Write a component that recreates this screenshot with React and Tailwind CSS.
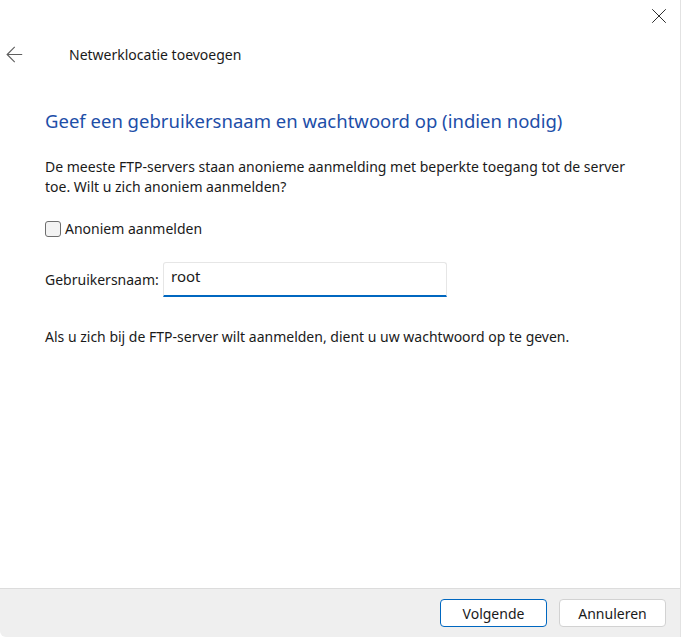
import { ArrowLeft, X } from 'lucide-react';

export default function App() {
  return (
    <div
      className="w-[681px] h-[637px] bg-white flex flex-col text-[#1a1a1a] overflow-hidden rounded-bl-[6px] border-r border-[#e2e2e2]"
      style={{ fontFamily: '"Segoe UI", "Noto Sans", sans-serif' }}
    >
      {/* Title bar */}
      <div className="h-[34px] flex justify-end">
        <button className="w-[42px] h-[32px] flex items-center justify-center text-[#1a1a1a]">
          <X size={26} strokeWidth={0.85} />
        </button>
      </div>

      {/* Header row */}
      <div className="h-[40px] flex items-center">
        <div className="w-[69px] pl-[2px] flex items-center text-[#5f5f5f]">
          <ArrowLeft size={25} strokeWidth={1.05} />
        </div>
        <span className="text-[14px] text-[#1a1a1a]">Netwerklocatie toevoegen</span>
      </div>

      {/* Content */}
      <div className="flex-1 pl-[45px] pr-[30px] pt-[33px]">
        <h1 className="text-[18.5px] leading-[28px] text-[#1d4ea8]">
          Geef een gebruikersnaam en wachtwoord op (indien nodig)
        </h1>

        <p className="mt-[22px] text-[14px] leading-[20px]">
          De meeste FTP-servers staan anonieme aanmelding met beperkte toegang tot de server toe. Wilt u zich anoniem aanmelden?
        </p>

        <label className="mt-[22px] flex items-center gap-[4px] text-[14px] leading-[20px]">
          <span className="w-[16px] h-[16px] rounded-[3px] border border-[#6e6e6e] bg-[#f3f3f3]" />
          Anoniem aanmelden
        </label>

        <div className="mt-[23px] flex items-center">
          <span className="w-[118px] text-[14px]">Gebruikersnaam:</span>
          <div className="w-[284px] h-[35px] border border-[#e6e6e6] border-b-2 border-b-[#0067c0] rounded-t-[3px] flex items-center px-[7px] pb-[5px] text-[15px]">
            root
          </div>
        </div>

        <p className="mt-[30px] text-[14px] leading-[20px]">
          Als u zich bij de FTP-server wilt aanmelden, dient u uw wachtwoord op te geven.
        </p>
      </div>

      {/* Footer */}
      <div className="h-[49px] bg-[#efefef] border-t border-[#dcdcdc] flex items-center justify-end gap-[12px] pr-[14px]">
        <button className="w-[107px] h-[28px] rounded-[4px] bg-white border border-[#0067c0] text-[14px]">
          Volgende
        </button>
        <button className="w-[107px] h-[28px] rounded-[4px] bg-white border border-[#d2d2d2] text-[14px]">
          Annuleren
        </button>
      </div>
    </div>
  );
}
